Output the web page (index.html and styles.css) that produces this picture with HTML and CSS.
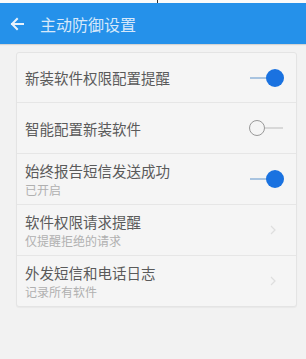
FILE: index.html
```html
<!DOCTYPE html>
<html lang="zh">
<head>
<meta charset="utf-8">
<link rel="stylesheet" href="styles.css">
</head>
<body>
<div class="topstrip"><span class="tick"></span></div>
<header class="appbar">
  <svg class="back" width="14" height="14" viewBox="0 0 14 14"><path d="M13 7H2M7 2L2 7l5 5" fill="none" stroke="#e8f2fc" stroke-width="2" stroke-linecap="square"/></svg>
  <span class="title">主动防御设置</span>
</header>
<main class="content">
  <section class="card">
    <div class="row">
      <div class="text"><div class="t">新装软件权限配置提醒</div></div>
      <span class="switch on"><span class="track"></span><span class="thumb"></span></span>
    </div>
    <div class="row">
      <div class="text"><div class="t">智能配置新装软件</div></div>
      <span class="switch off"><span class="thumb"></span><span class="track"></span></span>
    </div>
    <div class="row">
      <div class="text"><div class="t">始终报告短信发送成功</div><div class="s">已开启</div></div>
      <span class="switch on"><span class="track"></span><span class="thumb"></span></span>
    </div>
    <div class="row">
      <div class="text"><div class="t">软件权限请求提醒</div><div class="s">仅提醒拒绝的请求</div></div>
      <svg class="chev" width="6" height="10" viewBox="0 0 6 10"><path d="M1 1l4 4-4 4" fill="none" stroke="#dedede" stroke-width="1.2"/></svg>
    </div>
    <div class="row">
      <div class="text"><div class="t">外发短信和电话日志</div><div class="s">记录所有软件</div></div>
      <svg class="chev" width="6" height="10" viewBox="0 0 6 10"><path d="M1 1l4 4-4 4" fill="none" stroke="#dedede" stroke-width="1.2"/></svg>
    </div>
  </section>
</main>
</body>
</html>
```
FILE: styles.css
```css
html, body {
  margin: 0;
  padding: 0;
  background: #f2f2f2;
  font-family: "Noto Sans CJK SC", "Noto Sans", sans-serif;
  width: 306px;
  height: 359px;
  overflow: hidden;
}
.topstrip {
  height: 3px;
  background: #fafafa;
  position: relative;
}
.tick {
  position: absolute;
  left: 157px;
  top: 0;
  width: 1px;
  height: 3px;
  background: #333;
}
.appbar {
  height: 41px;
  background: #2591ea;
  display: flex;
  align-items: center;
  padding-left: 10px;
  box-shadow: 0 1px 1px rgba(0,0,0,0.12);
}
.back {
  margin-right: 16px;
}
.title {
  color: #d6e8fa;
  font-size: 16px;
  line-height: 1;
}
.content {
  padding: 8px 9px 0 16px;
}
.card {
  background: #f5f5f5;
  border: 1px solid #e4e4e4;
  border-radius: 3px;
  box-shadow: 0 1px 1px rgba(0,0,0,0.04);
}
.row {
  height: 50px;
  display: flex;
  align-items: center;
  justify-content: space-between;
  padding: 0 12px 0 8px;
  border-top: 1px solid #e6e6e6;
}
.row:first-child {
  border-top: none;
  height: 49px;
}
.t {
  font-size: 14.5px;
  color: #5a5a5a;
  line-height: 21px;
}
.s {
  font-size: 12px;
  color: #b0b0b0;
  line-height: 17px;
}
.switch {
  display: flex;
  align-items: center;
}
.switch .track {
  height: 2px;
  width: 18px;
  background: #a9c4e0;
}
.switch.on .thumb {
  width: 18px;
  height: 18px;
  border-radius: 50%;
  background: #1a72e0;
  margin-left: -2px;
}
.switch.off {
  margin-right: 1px;
}
.switch.off .thumb {
  width: 16px;
  height: 16px;
  border-radius: 50%;
  border: 1.5px solid #999;
  box-sizing: border-box;
}
.switch.off .track {
  background: #d8d8d8;
  width: 18px;
}
.chev {
  margin-right: 8px;
}
```
